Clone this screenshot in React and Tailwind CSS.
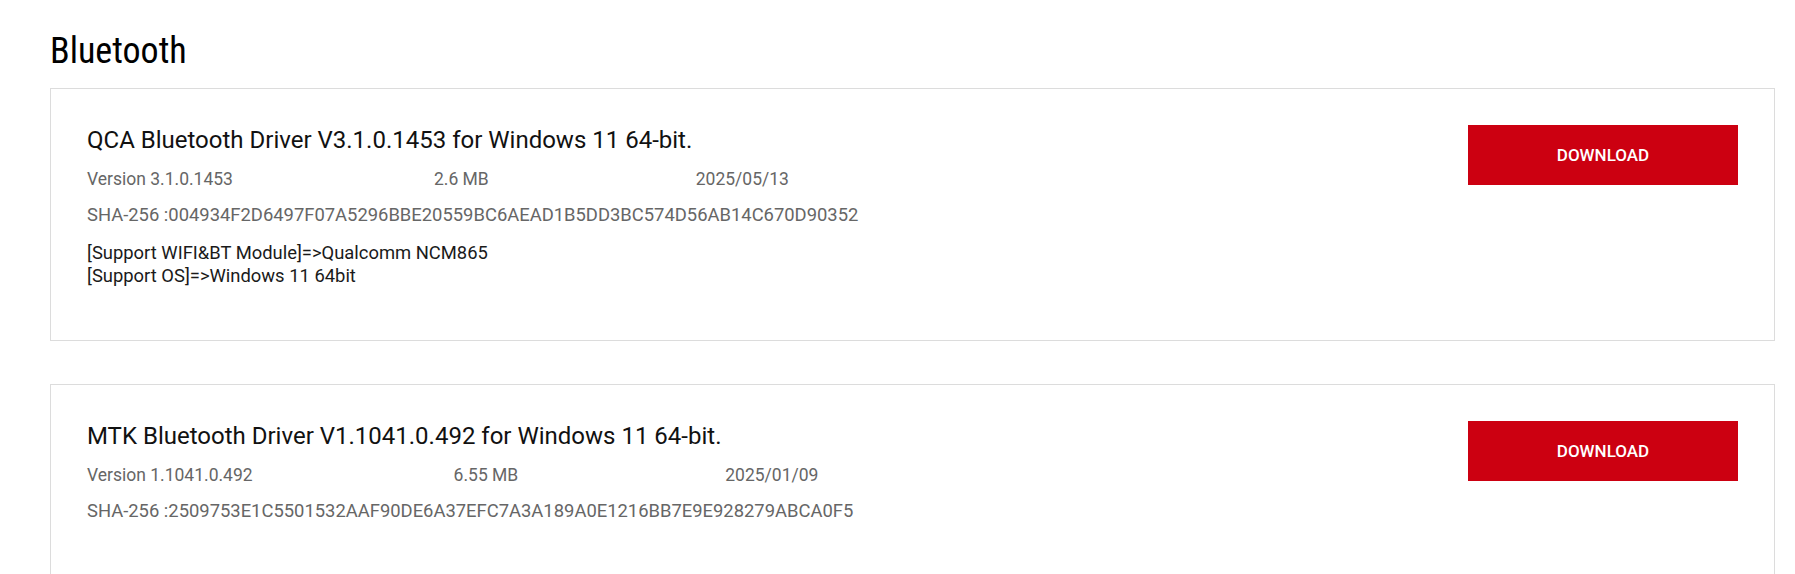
import React from 'react';

const drivers = [
  {
    id: 1,
    title: 'QCA Bluetooth Driver V3.1.0.1453 for Windows 11 64-bit.',
    version: 'Version 3.1.0.1453',
    size: '2.6 MB',
    date: '2025/05/13',
    sha: 'SHA-256 :004934F2D6497F07A5296BBE20559BC6AEAD1B5DD3BC574D56AB14C670D90352',
    notes: ['[Support WIFI&BT Module]=>Qualcomm NCM865', '[Support OS]=>Windows 11 64bit'],
  },
  {
    id: 2,
    title: 'MTK Bluetooth Driver V1.1041.0.492 for Windows 11 64-bit.',
    version: 'Version 1.1041.0.492',
    size: '6.55 MB',
    date: '2025/01/09',
    sha: 'SHA-256 :2509753E1C5501532AAF90DE6A37EFC7A3A189A0E1216BB7E9E928279ABCA0F5',
    notes: [],
  },
];

function DriverCard({ driver }) {
  return (
    <div className="flex justify-between min-h-[253px] border border-[#dcdcdc] bg-white pt-[36px] px-[36px] pb-[50px]">
      <div className="flex flex-col">
        <h3 className="text-[24px] leading-[30px] font-normal text-[#111]">{driver.title}</h3>
        <div className="flex mt-[11px] text-[17.5px] leading-[27px] text-[#666]">
          <span className="mr-[201px]">{driver.version}</span>
          <span className="mr-[207px]">{driver.size}</span>
          <span>{driver.date}</span>
        </div>
        <p className="mt-[8px] text-[18.4px] leading-[27px] text-[#666]">{driver.sha}</p>
        {driver.notes.length > 0 && (
          <div className="mt-[13px] text-[18.4px] leading-[23px] text-[#1a1a1a]">
            {driver.notes.map(n => (
              <p key={n}>{n}</p>
            ))}
          </div>
        )}
      </div>
      <button
        type="button"
        className="w-[270px] h-[60px] shrink-0 pt-[1px] bg-[#cc0011] text-white text-[17px] font-medium uppercase"
      >
        Download
      </button>
    </div>
  );
}

export default function App() {
  return (
    <div className="min-h-screen bg-white pt-[30px] pl-[50px] pr-[20px]" style={{ fontFamily: 'Roboto, "Noto Sans", sans-serif' }}>
      <h2 className="text-[36px] leading-[42px] font-normal text-[#000] font-stretch-semi-condensed">Bluetooth</h2>
      <div className="mt-[16px] flex flex-col gap-[43px]">
        {drivers.map(d => (
          <DriverCard key={d.id} driver={d} />
        ))}
      </div>
    </div>
  );
}
